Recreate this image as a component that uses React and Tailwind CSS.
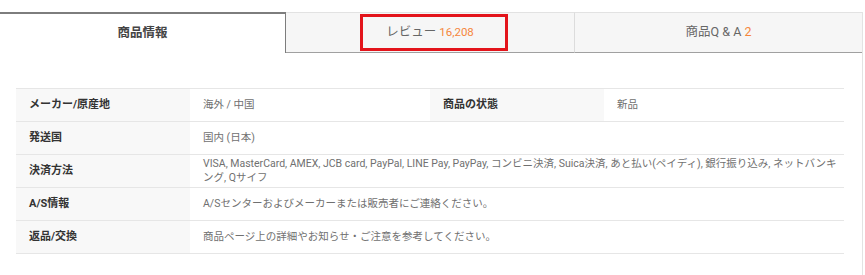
import React from "react";

const rows = [
  { label: "発送国", value: "国内 (日本)" },
  {
    label: "決済方法",
    value:
      "VISA, MasterCard, AMEX, JCB card, PayPal, LINE Pay, PayPay, コンビニ決済, Suica決済, あと払い(ペイディ), 銀行振り込み, ネットバンキング, Qサイフ",
  },
  { label: "A/S情報", value: "A/Sセンターおよびメーカーまたは販売者にご連絡ください。" },
  { label: "返品/交換", value: "商品ページ上の詳細やお知らせ・ご注意を参考してください。" },
];

const labelCls =
  "h-[33px] bg-[#f8f8f8] pl-[13px] pr-2 text-left align-middle text-[11px] font-bold text-[#333]";
const valueCls =
  "h-[33px] pl-[13px] pr-0 align-middle text-[10.5px] break-all text-[#707070]";

export default function App() {
  return (
    <div
      className="h-[275px] w-[865px] bg-white pt-[12px]"
      style={{ fontFamily: "Roboto, 'Noto Sans CJK JP', sans-serif" }}
    >
      <div className="h-[263px] w-[863px] border-r border-[#e3e3e3]">
        {/* tabs */}
        <div className="flex h-[41px] text-[12.5px]">
          <div className="flex w-[286px] items-center justify-center border-t-2 border-r border-[#7d7d7d] font-bold text-[#444]">
            商品情報
          </div>
          <div className="relative flex w-[288px] items-center justify-center border-t border-b border-t-[#e2e2e2] border-b-[#a0a0a0] bg-[#f6f6f6] text-[#666]">
            <span>
              レビュー <span className="text-[11.5px] text-[#f5863c]">16,208</span>
            </span>
            <div className="absolute left-[74px] top-[1px] h-[37px] w-[148px] border-[3px] border-[#e3141b]"></div>
          </div>
          <div className="flex flex-1 items-center justify-center border-t border-b border-l border-t-[#e2e2e2] border-l-[#dcdcdc] border-b-[#a0a0a0] bg-[#f6f6f6] text-[#666]">
            <span>
              商品Q &amp; A <span className="text-[#f5863c]">2</span>
            </span>
          </div>
        </div>

        {/* info table */}
        <div className="pl-[16px] pt-[35px]">
          <table className="w-[828px] table-fixed border-collapse leading-[14px]">
            <colgroup>
              <col className="w-[174px]" />
              <col className="w-[240px]" />
              <col className="w-[174px]" />
              <col className="w-[240px]" />
            </colgroup>
            <tbody>
              <tr className="border-y border-[#e6e6e6]">
                <th className={labelCls}>メーカー/原産地</th>
                <td className={valueCls}>海外 / 中国</td>
                <th className={labelCls}>商品の状態</th>
                <td className={valueCls}>新品</td>
              </tr>
              {rows.map((row, i) => (
                <tr key={i} className="border-b border-[#e6e6e6]">
                  <th className={labelCls}>{row.label}</th>
                  <td colSpan={3} className={valueCls}>
                    {row.value}
                  </td>
                </tr>
              ))}
            </tbody>
          </table>
        </div>
      </div>
    </div>
  );
}
